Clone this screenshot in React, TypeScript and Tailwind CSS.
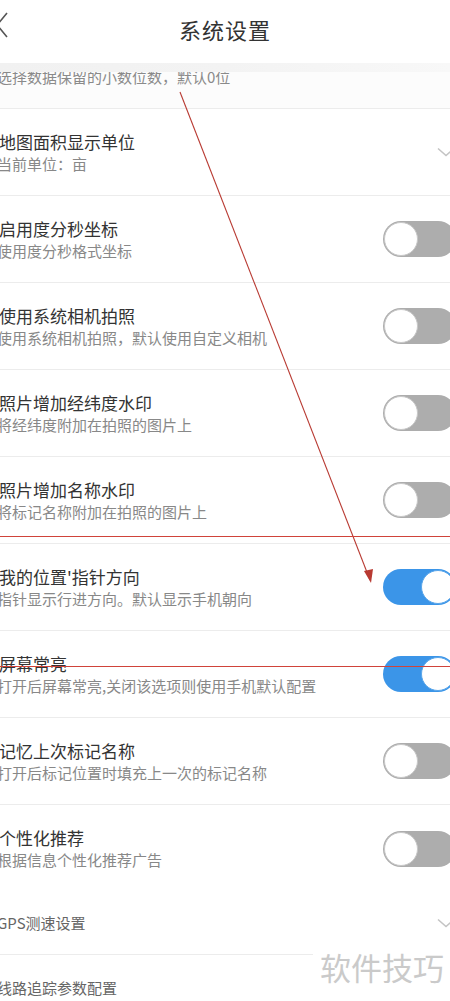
import React from "react";

type Row = {
  title: string;
  sub: string;
  kind: "chev" | "on" | "off";
  border?: boolean;
};

const rows: Row[] = [
  { title: "地图面积显示单位", sub: "当前单位：亩", kind: "chev" },
  { title: "启用度分秒坐标", sub: "使用度分秒格式坐标", kind: "off" },
  { title: "使用系统相机拍照", sub: "使用系统相机拍照，默认使用自定义相机", kind: "off" },
  { title: "照片增加经纬度水印", sub: "将经纬度附加在拍照的图片上", kind: "off" },
  { title: "照片增加名称水印", sub: "将标记名称附加在拍照的图片上", kind: "off" },
  { title: "我的位置'指针方向", sub: "指针显示行进方向。默认显示手机朝向", kind: "on" },
  { title: "屏幕常亮", sub: "打开后屏幕常亮,关闭该选项则使用手机默认配置", kind: "on" },
  { title: "记忆上次标记名称", sub: "打开后标记位置时填充上一次的标记名称", kind: "off" },
  { title: "个性化推荐", sub: "根据信息个性化推荐广告", kind: "off", border: false },
];

function Chevron() {
  return (
    <svg width="18" height="10" viewBox="0 0 18 10" className="mr-[-5px] shrink-0">
      <path d="M1 1.5 L9 8.5 L17 1.5" fill="none" stroke="#c4c4c4" strokeWidth="1.6" />
    </svg>
  );
}

function Toggle({ on }: { on: boolean }) {
  return on ? (
    <div className="shrink-0 mr-[-6px] w-[73px] h-[36px] rounded-full bg-[#3b95e8] flex items-center justify-end pr-px">
      <div className="w-[34px] h-[34px] rounded-full bg-white border border-[#5aa6ea]" />
    </div>
  ) : (
    <div className="shrink-0 mr-[-6px] w-[73px] h-[36px] rounded-full bg-[#adadad] flex items-center pl-px">
      <div className="w-[34px] h-[34px] rounded-full bg-white border border-[#c8c8c8]" />
    </div>
  );
}

export default function App() {
  const font = { fontFamily: '"Noto Sans CJK SC", "Noto Sans", sans-serif' };
  return (
    <div className="relative w-[450px] h-[1001px] overflow-hidden bg-white" style={font}>
      {/* header */}
      <div className="relative z-10 h-[63px] bg-white flex items-center justify-center">
        <svg width="14" height="26" viewBox="0 0 14 26" className="absolute left-[-5px] top-[12px]">
          <path d="M12 1 L2 13 L12 25" fill="none" stroke="#555" strokeWidth="1.6" />
        </svg>
        <span className="text-[22px] leading-[30px] text-[#333] tracking-[1px] mt-[-6px]">系统设置</span>
      </div>
      <div className="h-[9px] bg-gradient-to-r from-[#f1f1f1] via-[#f3f3f3] to-[#f8f8f8]" />
      {/* partially scrolled row */}
      <div className="h-[37px] overflow-hidden border-b border-[#ececec] bg-[#fcfcfc]">
        <div className="ml-[-3px] mt-[-5px] text-[15px] leading-[20px] text-[#8a8a8a]">选择数据保留的小数位数，默认0位</div>
      </div>

      {rows.map((r, i) => (
        <div
          key={i}
          className={
            "h-[87px] flex items-center justify-between " +
            (r.border === false ? "" : "border-b border-[#ececec]")
          }
        >
          <div className="flex flex-col">
            <div className="ml-[-1px] text-[17px] leading-[22px] text-[#333]">{r.title}</div>
            <div className="ml-[-3px] mt-[1px] text-[15px] leading-[20px] text-[#888]">{r.sub}</div>
          </div>
          {r.kind === "chev" ? <Chevron /> : <Toggle on={r.kind === "on"} />}
        </div>
      ))}

      <div className="h-[63px] flex items-center justify-between border-b border-[#ececec]">
        <div className="ml-[-3px] text-[15px] leading-[20px] text-[#666]">GPS测速设置</div>
        <Chevron />
      </div>
      <div className="h-[64px] flex items-center">
        <div className="ml-[-3px] mt-[2px] text-[15px] leading-[20px] text-[#666]">线路追踪参数配置</div>
      </div>

      {/* watermark */}
      <div className="absolute left-[313px] top-[944px] w-[140px] h-[46px] bg-white flex items-center pl-[7px]">
        <span className="text-[31px] leading-[40px] text-[#cacaca]">软件技巧</span>
      </div>

      {/* red annotations */}
      <svg className="absolute left-0 top-0 pointer-events-none" width="450" height="1001" viewBox="0 0 450 1001">
        <line x1="180" y1="92" x2="370" y2="580" stroke="#b83a32" strokeWidth="1.1" />
        <path d="M364 571 L371 583 L373 569 Z" fill="#b83a32" />
        <line x1="0" y1="536.5" x2="450" y2="536.5" stroke="#d0433a" strokeWidth="1.2" />
        <line x1="0" y1="666.5" x2="450" y2="666.5" stroke="#d0433a" strokeWidth="1.2" />
      </svg>
    </div>
  );
}
